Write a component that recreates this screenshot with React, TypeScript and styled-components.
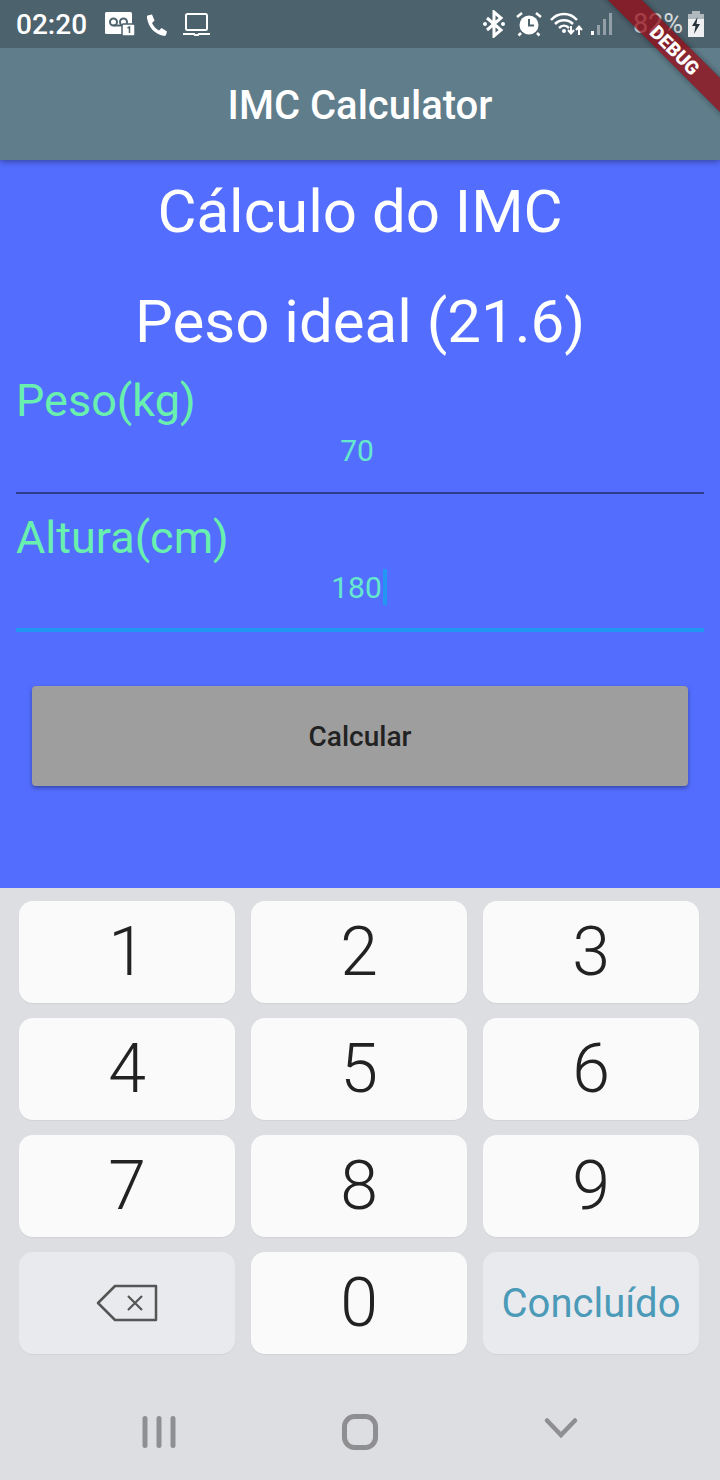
import { ReactElement, ReactNode } from "react";
import styled, { createGlobalStyle } from "styled-components";

const GlobalStyle = createGlobalStyle`
  html, body {
    margin: 0;
    padding: 0;
    background: #536dfe;
  }
  * {
    box-sizing: border-box;
  }
`;

const Screen = styled.div`
  position: relative;
  width: 720px;
  height: 1480px;
  overflow: hidden;
  display: flex;
  flex-direction: column;
  font-family: Roboto, "Liberation Sans", sans-serif;
  background: #536dfe;
`;

const Header = styled.header`
  position: relative;
  z-index: 1;
  flex: none;
  background: #607d8b;
  box-shadow: 0 2px 6px rgba(0, 0, 0, 0.35);
`;

const StatusBar = styled.div`
  height: 48px;
  padding: 0 16px;
  display: flex;
  align-items: center;
  justify-content: space-between;
  background: #4c626d;
  color: #fff;
`;

const StatusGroup = styled.div`
  display: flex;
  align-items: center;
`;

const Clock = styled.span`
  font-size: 28px;
  font-weight: 500;
  margin-right: 18px;
`;

const BatteryText = styled.span`
  font-size: 27px;
  font-weight: 400;
  color: rgba(255, 255, 255, 0.8);
  margin: 0 5px 0 21px;
`;

const Icon = styled.svg<{ $gap?: number }>`
  display: block;
  flex: none;
  margin-right: ${(props) => props.$gap ?? 0}px;
`;

const AppBar = styled.div`
  height: 112px;
  padding-top: 2px;
  display: flex;
  align-items: center;
  justify-content: center;
  color: #fff;
  font-size: 40px;
  font-weight: 500;
`;

const Ribbon = styled.div`
  position: absolute;
  z-index: 3;
  top: 38px;
  left: 585px;
  width: 180px;
  height: 24px;
  display: flex;
  align-items: center;
  justify-content: center;
  transform: rotate(45deg);
  background: rgba(150, 10, 20, 0.75);
  box-shadow: 0 0 6px rgba(0, 0, 0, 0.4);
  color: #fff;
  font-size: 19px;
  font-weight: 900;
`;

const Content = styled.main`
  flex: 1;
  padding: 0 16px;
`;

const Heading = styled.h1<{ $gap?: number }>`
  margin: ${(props) => props.$gap ?? 0}px 0 0;
  color: #fff;
  font-size: 60px;
  font-weight: 400;
  line-height: 104px;
  text-align: center;
`;

const Field = styled.div<{ $focused?: boolean }>`
  height: ${(props) => (props.$focused ? 138 : 120)}px;
  padding-top: ${(props) => (props.$focused ? 17 : 0)}px;
  border-bottom: ${(props) =>
    props.$focused ? "4px solid #2196f3" : "2px solid rgba(0, 0, 0, 0.45)"};
`;

const FieldLabel = styled.label`
  display: block;
  color: #69f0ae;
  font-size: 45px;
  line-height: 54px;
`;

const FieldValue = styled.div`
  display: flex;
  justify-content: center;
  align-items: center;
  height: 40px;
  margin-top: 2px;
  padding-right: 6px;
  color: #66e8cc;
  font-size: 30px;
`;

const Caret = styled.span`
  width: 4px;
  height: 36px;
  margin-right: -4px;
  margin-left: 1px;
  background: #2196f3;
`;

const CalcButton = styled.button`
  display: block;
  width: 656px;
  height: 100px;
  margin: 54px 16px 0;
  border: 0;
  border-radius: 4px;
  background: #9e9e9e;
  box-shadow: 0 2px 4px rgba(0, 0, 0, 0.35);
  color: #222;
  font-family: inherit;
  font-size: 28px;
  font-weight: 500;
`;

const Keyboard = styled.section`
  flex: none;
  height: 592px;
  padding: 13px 21px 0 19px;
  background: #dddee2;
`;

const KeyGrid = styled.div`
  display: grid;
  grid-template-columns: repeat(3, 216px);
  grid-auto-rows: 102px;
  column-gap: 16px;
  row-gap: 15px;
`;

const Key = styled.div<{ $fn?: boolean }>`
  display: flex;
  align-items: center;
  justify-content: center;
  border-radius: 14px;
  background: ${(props) => (props.$fn ? "#e9eaee" : "#fafafb")};
  box-shadow: 0 1px 1px rgba(0, 0, 0, 0.05);
  color: #222;
  font-size: 68px;
  font-weight: 300;
`;

const DoneLabel = styled.span`
  color: #4b9ab8;
  font-size: 40px;
  font-weight: 400;
`;

const NavBar = styled.nav`
  display: grid;
  grid-template-columns: 318px 84px 318px;
  justify-items: center;
  align-items: start;
  margin: 60px -21px 0 -19px;
  height: 36px;
`;

const IconGlyph = ({ w, h, gap, children }: { w: number; h: number; gap?: number; children: ReactNode }): ReactElement => (
  <Icon width={w} height={h} viewBox={`0 0 ${w} ${h}`} $gap={gap}>
    {children}
  </Icon>
);

const digits = ["1", "2", "3", "4", "5", "6", "7", "8", "9"];

const App = (): ReactElement => {
  return (
    <Screen>
      <GlobalStyle />
      <Header>
        <StatusBar>
          <StatusGroup>
            <Clock>02:20</Clock>
            {/* voicemail with count badge */}
            <IconGlyph w={30} h={26} gap={11}>
              <rect x="0" y="1" width="27" height="22" rx="1.500" fill="#fff" />
              <circle cx="8.500" cy="11" r="3.500" fill="none" stroke="#4c626d" strokeWidth="2" />
              <circle cx="18.500" cy="11" r="3.500" fill="none" stroke="#4c626d" strokeWidth="2" />
              <path d="M8.500 14.500h10" stroke="#4c626d" strokeWidth="2" />
              <rect x="17" y="13" width="13" height="12" rx="1.500" fill="#fff" stroke="#4c626d" strokeWidth="1.500" />
              <path d="M22.500 17l2-1v6" fill="none" stroke="#4c626d" strokeWidth="1.500" />
            </IconGlyph>
            {/* phone */}
            <IconGlyph w={24} h={24} gap={12}>
              <path
                d="M1.500 3.500L6 2.500l2.500 6L6 11c1.500 3.500 3.500 5.500 7 7.500l2.500-2.500 5.500 3.500-1 3.500c-.5 1-2 1-3 .8C8 21.500 2.500 15 1 6c-.2-1.500 0-2 .5-2.500z"
                fill="#fff"
              />
            </IconGlyph>
            {/* laptop */}
            <IconGlyph w={29} h={24}>
              <rect x="4" y="2" width="21" height="16" rx="1.500" fill="none" stroke="#fff" strokeWidth="2" />
              <path d="M1 22h11l1 1h3l1-1h11" fill="none" stroke="#fff" strokeWidth="2" />
            </IconGlyph>
          </StatusGroup>
          <StatusGroup>
            {/* bluetooth */}
            <IconGlyph w={24} h={28} gap={10}>
              <path d="M5 8l14 12-7 6V2l7 6L5 20" fill="none" stroke="#fff" strokeWidth="3" />
              <circle cx="3" cy="14" r="2" fill="#fff" />
              <circle cx="21" cy="14" r="2" fill="#fff" />
            </IconGlyph>
            {/* alarm */}
            <IconGlyph w={26} h={26} gap={8}>
              <circle cx="13" cy="14" r="9.500" fill="#fff" />
              <path d="M13 8v6.500h5" fill="none" stroke="#4c626d" strokeWidth="2" />
              <path d="M1 6l5-4M25 6l-5-4M5 22l-2.500 2.500M21 22l2.500 2.500" stroke="#fff" strokeWidth="2.500" />
            </IconGlyph>
            {/* wifi with data arrows */}
            <IconGlyph w={33} h={26} gap={7}>
              <path d="M1 9C8 1 20 1 27 9" fill="none" stroke="#fff" strokeWidth="2.500" />
              <path d="M5 13c5-5 13-5 18 0" fill="none" stroke="#fff" strokeWidth="2.500" />
              <path d="M9 17c3-3 7-3 10 0" fill="none" stroke="#fff" strokeWidth="2.500" />
              <circle cx="14" cy="20" r="2" fill="#fff" />
              <path d="M21 15v7m-3-3l3 3.500 3-3.500M29 24v-8m-3 3l3-3.500 3 3.500" fill="none" stroke="#fff" strokeWidth="2" />
            </IconGlyph>
            {/* signal */}
            <IconGlyph w={22} h={24}>
              <rect x="1" y="19" width="3" height="4" fill="#fff" />
              <rect x="7" y="13" width="3" height="10" fill="#fff" fillOpacity=".4" />
              <rect x="13" y="7" width="3" height="16" fill="#fff" fillOpacity=".4" />
              <rect x="19" y="1" width="3" height="22" fill="#fff" fillOpacity=".4" />
            </IconGlyph>
            <BatteryText>82%</BatteryText>
            {/* battery charging */}
            <IconGlyph w={16} h={26}>
              <rect x="4" y="0" width="8" height="3" fill="#fff" fillOpacity=".55" />
              <rect x="0" y="3" width="16" height="5" fill="#fff" fillOpacity=".55" />
              <rect x="0" y="8" width="16" height="18" fill="#fff" fillOpacity=".9" />
              <path d="M9.500 6L4 15h3.500L6 23l6-10H8.500z" fill="#26323a" />
            </IconGlyph>
          </StatusGroup>
        </StatusBar>
        <AppBar>IMC Calculator</AppBar>
      </Header>
      <Ribbon>DEBUG</Ribbon>
      <Content>
        <Heading>Cálculo do IMC</Heading>
        <Heading $gap={6}>Peso ideal (21.6)</Heading>
        <Field>
          <FieldLabel>Peso(kg)</FieldLabel>
          <FieldValue>70</FieldValue>
        </Field>
        <Field $focused>
          <FieldLabel>Altura(cm)</FieldLabel>
          <FieldValue>
            180
            <Caret />
          </FieldValue>
        </Field>
        <CalcButton>Calcular</CalcButton>
      </Content>
      <Keyboard>
        <KeyGrid>
          {digits.map((digit) => (
            <Key key={digit}>{digit}</Key>
          ))}
          <Key $fn>
            <svg width="62" height="38" viewBox="0 0 62 38">
              <path d="M60 2H19L2 19l17 17h41z" fill="none" stroke="#555" strokeWidth="2.500" strokeLinejoin="round" />
              <path d="M32 12l14 14M46 12L32 26" stroke="#555" strokeWidth="2.200" />
            </svg>
          </Key>
          <Key>0</Key>
          <Key $fn>
            <DoneLabel>Concluído</DoneLabel>
          </Key>
        </KeyGrid>
        <NavBar>
          <svg width="34" height="34" viewBox="0 0 34 34">
            <path d="M3 4.500v27M17 4.500v27M31 4.500v27" stroke="#8f8f91" strokeWidth="5" strokeLinecap="round" />
          </svg>
          <svg width="36" height="36" viewBox="0 0 36 36">
            <rect x="2.500" y="2.500" width="31" height="31" rx="10" fill="none" stroke="#8f8f91" strokeWidth="5" />
          </svg>
          <svg width="38" height="26" viewBox="0 0 38 26">
            <path d="M5 6.500L19 21 33 6.500" fill="none" stroke="#8f8f91" strokeWidth="4.500" strokeLinecap="round" />
          </svg>
        </NavBar>
      </Keyboard>
    </Screen>
  );
};

export default App;
